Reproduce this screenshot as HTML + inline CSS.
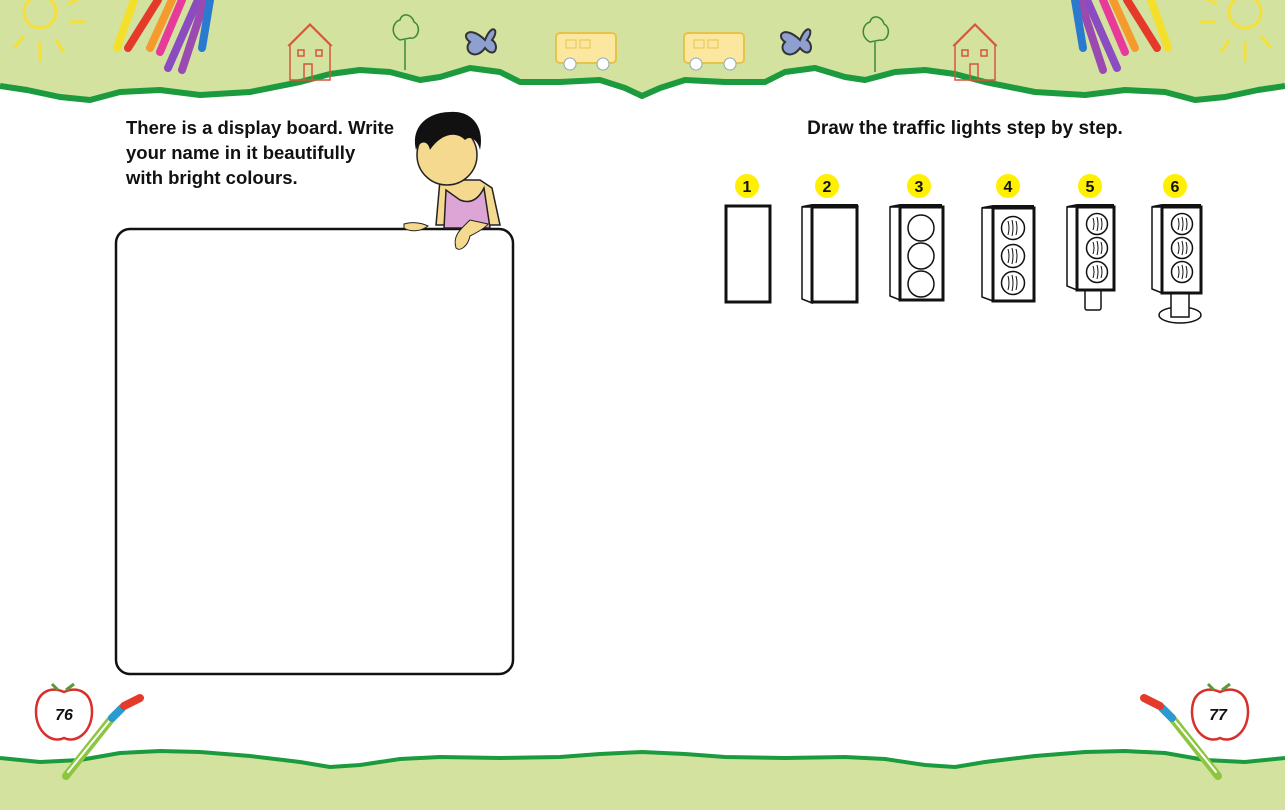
<!DOCTYPE html>
<html><head><meta charset="utf-8"><style>
html,body{margin:0;padding:0;background:#fff;width:1285px;height:810px;overflow:hidden}
svg{display:block}
text{font-family:"Liberation Sans",sans-serif;font-weight:bold}
</style></head><body>
<svg width="1285" height="810" viewBox="0 0 1285 810" xmlns="http://www.w3.org/2000/svg">
<!-- top band -->
<path d="M0 0H1285V86L1258 90 1225 97 1195 100 1165 92 1125 90 1085 95 1035 92 985 82 955 74 925 70 895 72 865 80 845 77 815 68 785 72 765 82 725 82 685 80 660 88 642 96 625 88 600 80 560 82 520 82 500 72 470 68 440 77 420 80 390 72 360 70 330 74 300 82 250 92 200 95 160 90 120 92 90 100 60 97 27 90 0 86Z" fill="#d3e29e"/>
<path d="M0 86L27 90 60 97 90 100 120 92 160 90 200 95 250 92 300 82 330 74 360 70 390 72 420 80 440 77 470 68 500 72 520 82 560 82 600 80 625 88 642 96 660 88 685 80 725 82 765 82 785 72 815 68 845 77 865 80 895 72 925 70 955 74 985 82 1035 92 1085 95 1125 90 1165 92 1195 100 1225 97 1258 90 1285 86" fill="none" stroke="#1c9a3e" stroke-width="6" stroke-linejoin="round"/>
<!-- bottom band -->
<path d="M0 758L40 762 80 760 120 753 160 751 200 752 250 756 300 762 330 767 360 765 400 759 440 757 500 758 560 757 600 754 642 752 685 754 725 757 785 758 845 757 885 759 925 765 955 767 985 762 1035 756 1085 752 1125 751 1165 753 1205 760 1245 762 1285 758V810H0Z" fill="#d3e29e"/>
<path d="M0 758L40 762 80 760 120 753 160 751 200 752 250 756 300 762 330 767 360 765 400 759 440 757 500 758 560 757 600 754 642 752 685 754 725 757 785 758 845 757 885 759 925 765 955 767 985 762 1035 756 1085 752 1125 751 1165 753 1205 760 1245 762 1285 758" fill="none" stroke="#1c9a3e" stroke-width="4" stroke-linejoin="round"/>
<!-- sun -->
<g stroke="#f5e03a" stroke-width="3" fill="none">
<circle cx="40" cy="12" r="16"/><path d="M14 48L24 36M40 62V42M64 52L56 40M70 22H86M68 4L80 -2"/>
<circle cx="1245" cy="12" r="16"/><path d="M1271 48L1261 36M1245 62V42M1221 52L1229 40M1215 22H1199M1217 4L1205 -2"/>
</g>
<!-- crayons -->
<g stroke-width="8" stroke-linecap="round">
<path d="M117 48L134 0" stroke="#f4df2a"/>
<path d="M128 48L158 0" stroke="#e53a2a"/>
<path d="M150 48L172 0" stroke="#f59a2c"/>
<path d="M160 52L182 0" stroke="#e73a9a"/>
<path d="M168 68L198 0" stroke="#8a4cc0"/>
<path d="M182 70L205 0" stroke="#9a4ab0"/>
<path d="M202 48L210 0" stroke="#2a7ad0"/>
<path d="M1168 48L1151 0" stroke="#f4df2a"/>
<path d="M1157 48L1127 0" stroke="#e53a2a"/>
<path d="M1135 48L1113 0" stroke="#f59a2c"/>
<path d="M1125 52L1103 0" stroke="#e73a9a"/>
<path d="M1117 68L1087 0" stroke="#8a4cc0"/>
<path d="M1103 70L1080 0" stroke="#9a4ab0"/>
<path d="M1083 48L1075 0" stroke="#2a7ad0"/>
</g>
<!-- houses -->
<g fill="none" stroke="#d8553a" stroke-width="1.5">
<path d="M290 80V45L310 25 330 45V80ZM288 46L310 24 332 46M304 80V64H312V80M298 50H304V56H298ZM316 50H322V56H316Z"/>
<path d="M955 80V45L975 25 995 45V80ZM953 46L975 24 997 46M970 80V64H978V80M962 50H968V56H962ZM981 50H987V56H981Z"/>
</g>
<!-- trees -->
<g fill="none" stroke="#3a8a3a" stroke-width="1.5">
<path d="M405 70V40M400 40C390 35 392 22 400 20 402 12 412 14 414 22 422 26 418 40 410 38Z"/>
<path d="M875 72V42M870 42C860 37 862 24 870 22 872 14 882 16 884 24 892 28 888 42 880 40Z"/>
</g>
<!-- butterflies -->
<g fill="#8da0d0" stroke="#333" stroke-width="2">
<path d="M485 40C470 25 460 35 470 42 462 50 475 62 485 48 495 60 500 45 492 40 500 30 492 22 485 40Z"/>
<path d="M800 40C785 25 775 35 785 42 777 50 790 62 800 48 810 60 815 45 807 40 815 30 807 22 800 40Z"/>
</g>
<!-- buses -->
<g>
<rect x="556" y="33" width="60" height="30" rx="4" fill="#fbe7a0" stroke="#e8c34a" stroke-width="2"/>
<rect x="566" y="40" width="10" height="8" fill="none" stroke="#e8c34a"/><rect x="580" y="40" width="10" height="8" fill="none" stroke="#e8c34a"/>
<circle cx="570" cy="64" r="6" fill="#fff" stroke="#8ab"/><circle cx="603" cy="64" r="6" fill="#fff" stroke="#8ab"/>
<rect x="684" y="33" width="60" height="30" rx="4" fill="#fbe7a0" stroke="#e8c34a" stroke-width="2"/>
<rect x="694" y="40" width="10" height="8" fill="none" stroke="#e8c34a"/><rect x="708" y="40" width="10" height="8" fill="none" stroke="#e8c34a"/>
<circle cx="696" cy="64" r="6" fill="#fff" stroke="#8ab"/><circle cx="730" cy="64" r="6" fill="#fff" stroke="#8ab"/>
</g>
<!-- left text -->
<text font-size="18.5" fill="#111"><tspan x="126" y="134">There is a display board. Write</tspan><tspan x="126" y="159">your name in it beautifully</tspan><tspan x="126" y="184">with bright colours.</tspan></text>
<!-- board -->
<rect x="116" y="229" width="397" height="445" rx="14" fill="#fff" stroke="#111" stroke-width="2.5"/>
<!-- boy -->
<path d="M440 180L436 225H500L492 188 480 180Z" fill="#f5d98e" stroke="#222" stroke-width="1.5"/>
<path d="M446 190L444 228H490L484 188C478 200 470 204 460 200Z" fill="#dca5d6" stroke="#222" stroke-width="1.5"/>
<ellipse cx="447" cy="155" rx="30" ry="30" fill="#f5d98e" stroke="#222" stroke-width="1.5"/>
<path d="M416 150C410 125 430 112 450 112 470 110 485 125 480 150 478 140 470 135 465 140 455 130 440 135 430 150 428 140 420 140 416 150Z" fill="#111"/>
<path d="M404 224C410 222 420 222 428 226 420 232 410 232 404 228Z" fill="#f5d98e" stroke="#222"/>
<path d="M470 220C462 228 452 235 456 248 460 252 468 246 470 236 478 232 485 228 488 224Z" fill="#f5d98e" stroke="#222"/>
<!-- right heading -->
<text x="965" y="134" font-size="19" fill="#111" text-anchor="middle">Draw the traffic lights step by step.</text>
<!-- badges -->
<g fill="#ffef00"><circle cx="747" cy="186" r="12"/><circle cx="827" cy="186" r="12"/><circle cx="919" cy="186" r="12"/><circle cx="1008" cy="186" r="12"/><circle cx="1090" cy="186" r="12"/><circle cx="1175" cy="186" r="12"/></g>
<g font-size="16" fill="#111" text-anchor="middle"><text x="747" y="192">1</text><text x="827" y="192">2</text><text x="919" y="192">3</text><text x="1008" y="192">4</text><text x="1090" y="192">5</text><text x="1175" y="192">6</text></g>
<g fill="#fff" stroke="#111">
<rect x="726" y="206" width="44" height="96" stroke-width="3"/>
<path d="M802 207L812 205H857L858 207" stroke-width="2"/><path d="M802 207V299L812 303V207Z" stroke-width="1.5"/><rect x="812" y="207" width="45" height="95" stroke-width="3"/>
<path d="M890 207L900 205H942" stroke-width="2"/><path d="M890 207V296L900 300V207Z" stroke-width="1.5"/><rect x="900" y="207" width="43" height="93" stroke-width="3"/>
<circle cx="921" cy="228" r="13" stroke-width="1.5"/><circle cx="921" cy="256" r="13" stroke-width="1.5"/><circle cx="921" cy="284" r="13" stroke-width="1.5"/>
<path d="M982 208L993 206H1034" stroke-width="2"/><path d="M982 208V297L993 301V208Z" stroke-width="1.5"/><rect x="993" y="208" width="41" height="93" stroke-width="3"/>
<circle cx="1013" cy="228" r="11.5" stroke-width="1.5"/><circle cx="1013" cy="256" r="11.5" stroke-width="1.5"/><circle cx="1013" cy="283" r="11.5" stroke-width="1.5"/>
<rect x="1085" y="290" width="16" height="20" rx="2" stroke-width="1.5"/>
<path d="M1067 207L1077 205H1114" stroke-width="2"/><path d="M1067 207V286L1077 290V207Z" stroke-width="1.5"/><rect x="1077" y="207" width="37" height="83" stroke-width="3"/>
<circle cx="1097" cy="224" r="10.5" stroke-width="1.5"/><circle cx="1097" cy="248" r="10.5" stroke-width="1.5"/><circle cx="1097" cy="272" r="10.5" stroke-width="1.5"/>
<ellipse cx="1180" cy="315" rx="21" ry="8" stroke-width="1.5"/>
<rect x="1171" y="293" width="18" height="24" stroke-width="1.5"/>
<path d="M1152 207L1162 205H1201" stroke-width="2"/><path d="M1152 207V289L1162 293V207Z" stroke-width="1.5"/><rect x="1162" y="207" width="39" height="86" stroke-width="3"/>
<circle cx="1182" cy="224" r="10.5" stroke-width="1.5"/><circle cx="1182" cy="248" r="10.5" stroke-width="1.5"/><circle cx="1182" cy="272" r="10.5" stroke-width="1.5"/>
</g>
<g fill="none" stroke="#111" stroke-width="1">
<path d="M1008 221Q1010 228 1008 235M1012 220Q1014 228 1012 236M1016 221Q1018 228 1016 235M1008 249Q1010 256 1008 263M1012 248Q1014 256 1012 264M1016 249Q1018 256 1016 263M1008 276Q1010 283 1008 290M1012 275Q1014 283 1012 291M1016 276Q1018 283 1016 290"/>
<path d="M1093 218Q1095 224 1093 230M1097 217Q1099 224 1097 231M1101 218Q1103 224 1101 230M1093 242Q1095 248 1093 254M1097 241Q1099 248 1097 255M1101 242Q1103 248 1101 254M1093 266Q1095 272 1093 278M1097 265Q1099 272 1097 279M1101 266Q1103 272 1101 278"/>
<path d="M1178 218Q1180 224 1178 230M1182 217Q1184 224 1182 231M1186 218Q1188 224 1186 230M1178 242Q1180 248 1178 254M1182 241Q1184 248 1182 255M1186 242Q1188 248 1186 254M1178 266Q1180 272 1178 278M1182 265Q1184 272 1182 279M1186 266Q1188 272 1186 278"/>
</g>
<!-- apples & brushes -->
<g fill="#fff" stroke="#d8302a" stroke-width="2.5">
<path d="M64 692C50 686 36 692 36 712 36 732 52 744 64 738 76 744 92 732 92 712 92 692 78 686 64 692Z"/>
<path d="M1220 692C1206 686 1192 692 1192 712 1192 732 1208 744 1220 738 1232 744 1248 732 1248 712 1248 692 1234 686 1220 692Z"/>
</g>
<path d="M58 690L52 684M66 690L74 684" stroke="#5a9a3a" stroke-width="3"/>
<path d="M1214 690L1208 684M1222 690L1230 684" stroke="#5a9a3a" stroke-width="3"/>
<text x="64" y="720" font-size="16" font-style="italic" font-weight="normal" text-anchor="middle" font-family="Liberation Serif" fill="#111">76</text>
<text x="1218" y="720" font-size="16" font-style="italic" font-weight="normal" text-anchor="middle" font-family="Liberation Serif" fill="#111">77</text>
<g stroke-linecap="round">
<path d="M66 776L112 718" stroke="#8cc63f" stroke-width="8"/><path d="M68 772L110 720" stroke="#fff" stroke-width="2"/>
<path d="M112 718L122 708" stroke="#2a9ad0" stroke-width="8"/><path d="M124 706L140 698" stroke="#e53a2a" stroke-width="8"/>
<path d="M1218 776L1172 718" stroke="#8cc63f" stroke-width="8"/><path d="M1216 772L1174 720" stroke="#fff" stroke-width="2"/>
<path d="M1172 718L1162 708" stroke="#2a9ad0" stroke-width="8"/><path d="M1160 706L1144 698" stroke="#e53a2a" stroke-width="8"/>
</g>
</svg>
</body></html>
